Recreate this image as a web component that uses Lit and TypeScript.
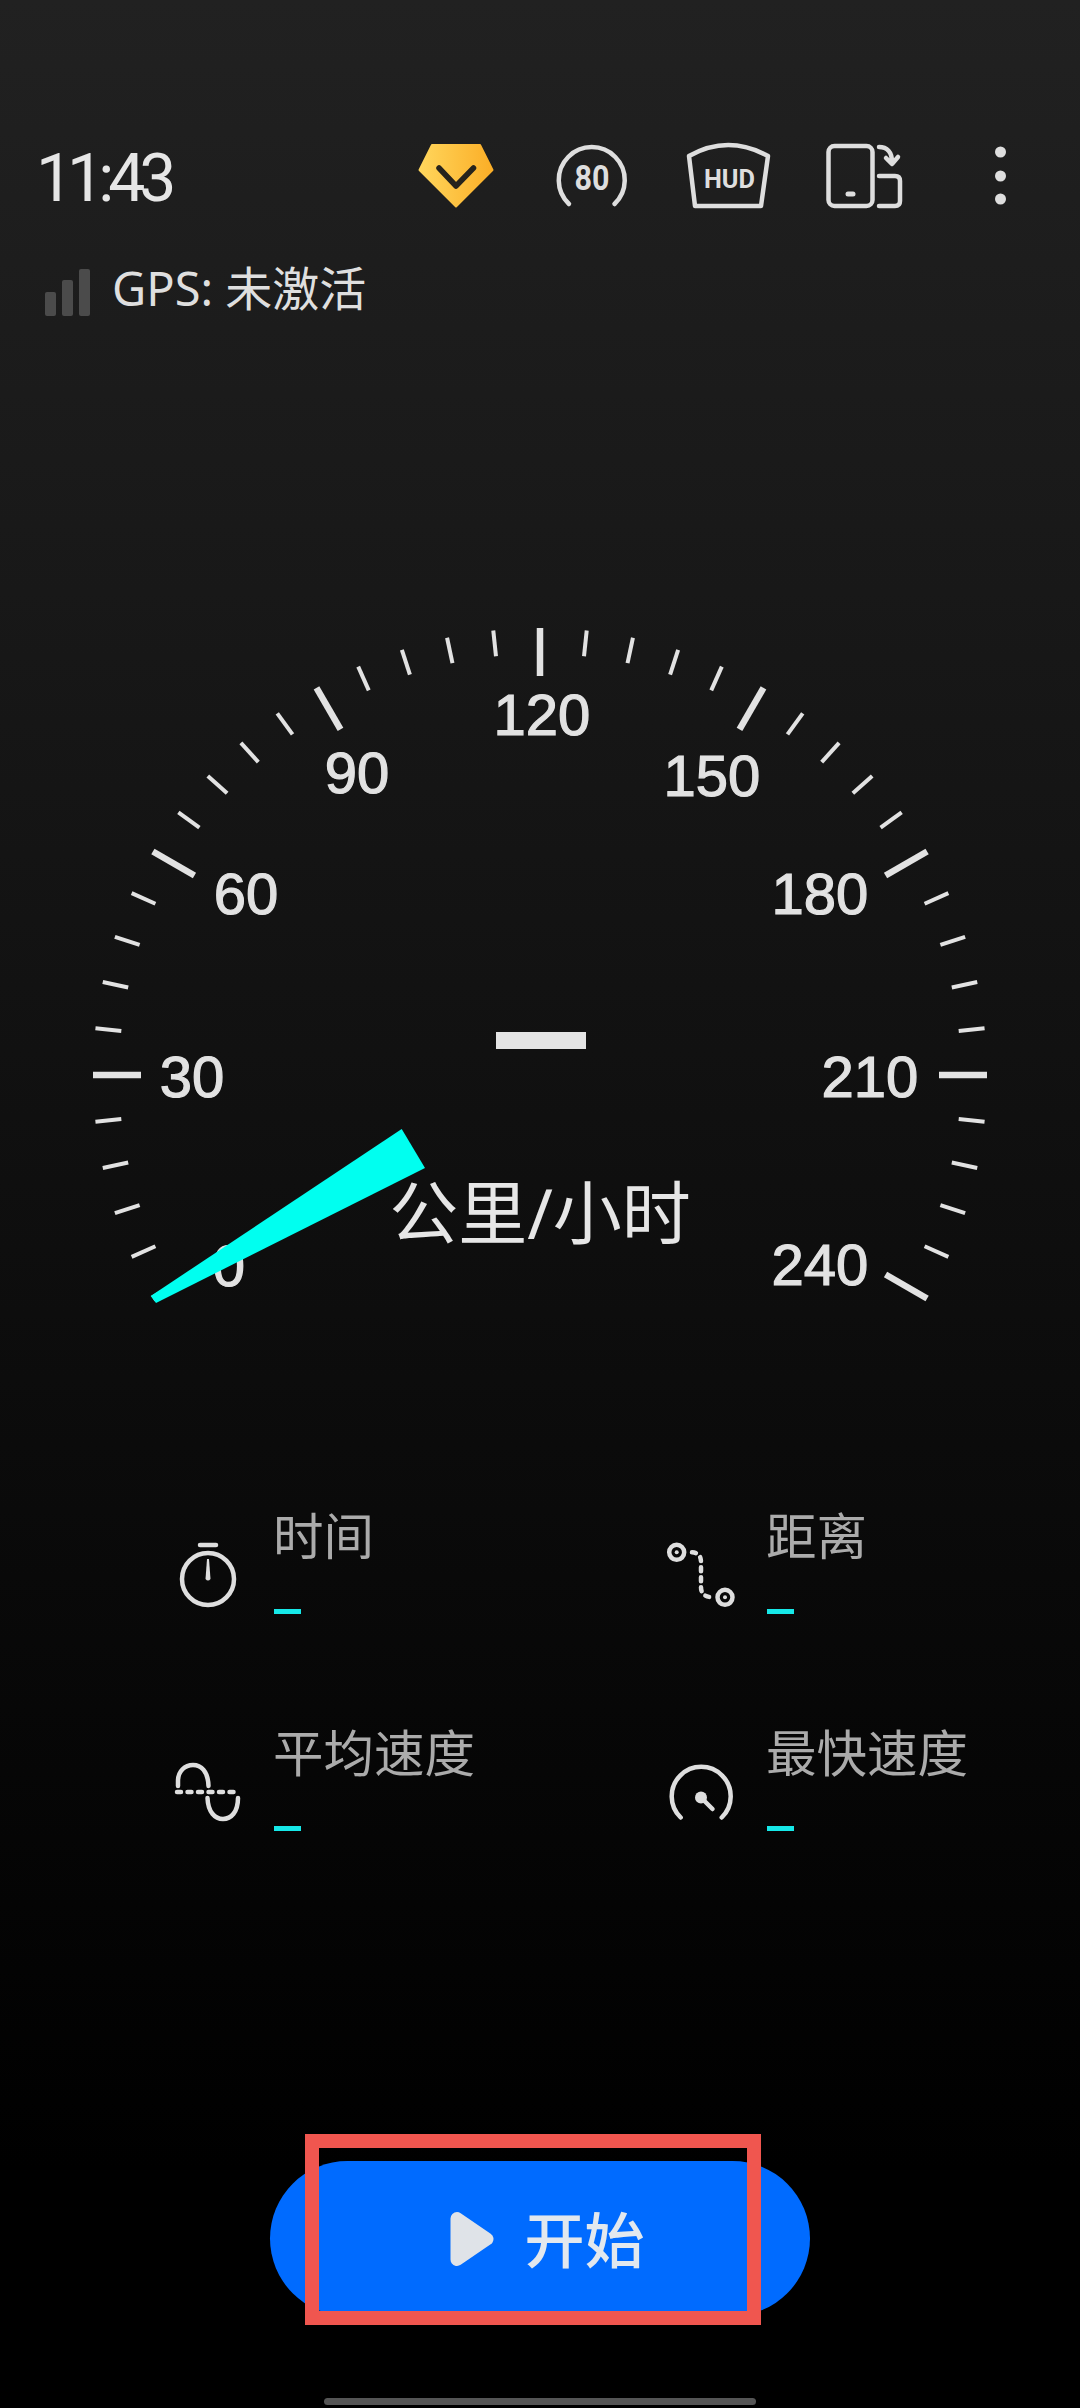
import { LitElement, html, css, svg } from "lit";
import { customElement } from "lit/decorators.js";

const CX = 540;
const CY = 1075;

function tick(i: number) {
  const major = i % 5 === 0;
  const a = ((-30 + i * 6) * Math.PI) / 180;
  const r1 = 447;
  const r0 = major ? 399 : 421;
  const x = (r: number) => (CX - r * Math.cos(a)).toFixed(2);
  const y = (r: number) => (CY - r * Math.sin(a)).toFixed(2);
  return svg`<line class=${major ? "major" : "minor"} x1=${x(r0)} y1=${y(r0)} x2=${x(r1)} y2=${y(r1)}></line>`;
}

const LABELS: [string, number, number][] = [
  ["0", 229, 1265],
  ["30", 192, 1076],
  ["60", 246, 893],
  ["90", 357, 772],
  ["120", 542, 714],
  ["150", 712, 775],
  ["180", 820, 893],
  ["210", 870, 1076],
  ["240", 820, 1264],
];

@customElement("app-root")
export class AppRoot extends LitElement {
  static styles = css`
    :host {
      display: flex;
      flex-direction: column;
      width: 1080px;
      height: 2408px;
      overflow: hidden;
      background: linear-gradient(180deg, #212121 0%, #000 90%);
      font-family: "Noto Sans", Roboto, "Noto Sans CJK SC", sans-serif;
      color: #e2e2e2;
    }
    svg { display: block; }
    .top {
      display: flex;
      align-items: center;
      height: 80px;
      margin-top: 136px;
      padding: 0 12px 0 36px;
    }
    .time {
      flex: 1;
      margin-top: 6px;
      font-family: Roboto, sans-serif;
      font-weight: 400;
      font-size: 66px;
      letter-spacing: -6px;
      line-height: 80px;
      color: #e6e6e6;
    }
    .cell { width: 136px; height: 80px; flex: none; }
    .ic { fill: none; stroke: #dedede; stroke-width: 4.500; stroke-linecap: round; stroke-linejoin: round; }
    .ictext { fill: #dedede; font-family: Roboto, sans-serif; font-weight: 700; text-anchor: middle; }
    .icfill { fill: #dedede; }
    .gps {
      display: flex;
      align-items: center;
      gap: 22px;
      height: 48px;
      margin-top: 53px;
      padding-left: 45px;
      font-size: 47px;
      line-height: 48px;
      color: #dfdfdf;
      font-family: "Noto Sans", "Noto Sans CJK SC", sans-serif;
    }
    .gps span { margin-top: -11px; }
    .bar { fill: #4b4b4b; }
    .gauge { margin-top: 283px; width: 1080px; height: 720px; flex: none; }
    .major { stroke: #e2e2e2; stroke-width: 6.500; }
    .minor { stroke: #e2e2e2; stroke-width: 4; }
    .num {
      fill: #e2e2e2;
      stroke: #e2e2e2;
      stroke-width: 1.200;
      font-family: "Liberation Sans", Arial, sans-serif;
      font-size: 58px;
      text-anchor: middle;
      dominant-baseline: central;
    }
    .unit {
      fill: #e6e6e6;
      font-family: "Noto Sans", "Noto Sans CJK SC", sans-serif;
      font-size: 69px;
      text-anchor: middle;
      dominant-baseline: central;
    }
    .speed { fill: #e4e4e4; }
    .needle { fill: #00fff0; }
    .stats {
      display: grid;
      grid-template-columns: 493px 1fr;
      row-gap: 109px;
      margin-top: 186px;
      padding-left: 164px;
    }
    .stat { display: flex; align-items: flex-end; gap: 22px; height: 108px; }
    .stat svg { width: 88px; height: 88px; flex: none; }
    .label {
      font-family: "Noto Sans CJK SC", sans-serif;
      font-size: 50.500px;
      line-height: 60px;
      margin: -3px 0 0 -1px;
      color: #ababab;
    }
    .dash { width: 27px; height: 5px; margin-top: 46px; background: #16e8e8; }
    .start {
      position: relative;
      box-sizing: border-box;
      display: flex;
      align-items: center;
      justify-content: center;
      gap: 31px;
      width: 540px;
      height: 155px;
      margin: 330px auto 0;
      padding-left: 14px;
      border-radius: 78px;
      background: #006bff;
      font-family: "Noto Sans CJK SC", sans-serif;
      font-weight: 500;
      font-size: 60px;
      color: #e2e8ee;
    }
    .start span { margin-top: -4px; }
    .start svg { width: 44px; height: 56px; flex: none; }
    .play { fill: #dfe3e8; stroke: #dfe3e8; stroke-width: 13; stroke-linejoin: round; }
    .mark {
      position: absolute;
      left: 35px;
      top: -27px;
      box-sizing: border-box;
      width: 456px;
      height: 191px;
      border: 14px solid #f0564f;
    }
    .home { width: 432px; height: 7px; margin: 82px auto 0; border-radius: 4px; background: #555; }
  `;

  private stat(label: string, icon: unknown) {
    return html`<div class="stat">
      ${icon}
      <div><div class="label">${label}</div><div class="dash"></div></div>
    </div>`;
  }

  render() {
    return html`
      <div class="top">
        <div class="time">11:43</div>
        <svg class="cell" viewBox="389 136 136 80">
          <defs>
            <linearGradient id="gem" x1="0" x2="1" y1="0" y2="0">
              <stop offset="0" stop-color="#ffd65c"></stop>
              <stop offset="1" stop-color="#fbae27"></stop>
            </linearGradient>
          </defs>
          <path fill="url(#gem)" stroke="url(#gem)" stroke-width="2" stroke-linejoin="round" d="M433 145H481L493.500 170L457 206.500L420.500 170Z"></path>
          <path fill="none" stroke="#26231c" stroke-width="5.500" stroke-linecap="round" stroke-linejoin="round" d="M440 168L457 186L474.500 168"></path>
        </svg>
        <svg class="cell" viewBox="525 136 136 80">
          <path class="ic" d="M570 204A33 33 0 1 1 615.500 204"></path>
          <text class="ictext" x="593" y="190" font-size="35" textLength="35" lengthAdjust="spacingAndGlyphs">80</text>
        </svg>
        <svg class="cell" viewBox="661 136 136 80">
          <path class="ic" d="M690 156Q729 134 769 156L762 206H696Z"></path>
          <text class="ictext" x="730.500" y="187.500" font-size="26" textLength="51" lengthAdjust="spacingAndGlyphs">HUD</text>
        </svg>
        <svg class="cell" viewBox="797 136 136 80">
          <rect class="ic" x="829.500" y="146" width="44" height="60" rx="6"></rect>
          <rect class="icfill" x="846.500" y="191.500" width="10" height="5" rx="2.500"></rect>
          <path class="ic" d="M880 176H896Q901 176 901 181V201Q901 206 896 206H880"></path>
          <path class="ic" d="M880 147C888 147 893 152 893 162M887 158L893 164L899 157"></path>
        </svg>
        <svg class="cell" viewBox="932 136 136 80">
          <circle class="icfill" cx="1000.500" cy="152" r="5.500"></circle>
          <circle class="icfill" cx="1000.500" cy="176" r="5.500"></circle>
          <circle class="icfill" cx="1000.500" cy="199" r="5.500"></circle>
        </svg>
      </div>

      <div class="gps">
        <svg width="45" height="48" viewBox="45 269 45 48">
          <rect class="bar" x="45" y="292" width="11" height="24" rx="2"></rect>
          <rect class="bar" x="62" y="280" width="11" height="36" rx="2"></rect>
          <rect class="bar" x="79" y="269" width="11" height="47" rx="2"></rect>
        </svg>
        <span>GPS: 未激活</span>
      </div>

      <svg class="gauge" viewBox="0 600 1080 720">
        ${Array.from({ length: 41 }, (_, i) => tick(i))}
        ${LABELS.map(([t, x, y]) => svg`<text class="num" x=${x} y=${y}>${t}</text>`)}
        <rect class="speed" x="496" y="1032" width="90" height="17"></rect>
        <text class="unit" x="540" y="1212">公里/小时</text>
        <polygon class="needle" points="150.700,1296 156,1303 425,1168 401.700,1129"></polygon>
      </svg>

      <div class="stats">
        ${this.stat("时间", html`<svg viewBox="164 1526 88 88">
          <circle class="ic" cx="208" cy="1579" r="26"></circle>
          <path class="ic" d="M200 1545H216"></path>
          <path class="icfill" d="M207 1559H209L210.500 1579Q208 1582 205.500 1579Z"></path>
        </svg>`)}
        ${this.stat("距离", html`<svg viewBox="657 1526 88 88">
          <circle class="ic" cx="676.700" cy="1552.300" r="7.500"></circle>
          <circle class="icfill" cx="676.700" cy="1552.300" r="2"></circle>
          <circle class="ic" cx="725" cy="1597.300" r="7.500"></circle>
          <circle class="icfill" cx="725" cy="1597.300" r="2"></circle>
          <path class="ic" stroke-dasharray="4 6" d="M692 1552.300Q701 1553 701 1562V1587Q701 1596 710 1597"></path>
        </svg>`)}
        ${this.stat("平均速度", html`<svg viewBox="164 1743 88 88">
          <path class="ic" d="M178 1786V1781C178 1771 185 1765 193 1765C201 1765 208 1771 208.500 1786"></path>
          <path class="ic" d="M207.500 1798C208 1812 215 1819 223 1819C231 1819 238 1812 238 1798"></path>
          <path class="ic" stroke-dasharray="4 6.500" d="M177 1792H240"></path>
        </svg>`)}
        ${this.stat("最快速度", html`<svg viewBox="657 1743 88 88">
          <path class="ic" d="M680.700 1817.500A29.500 29.500 0 1 1 721.700 1817.500"></path>
          <circle class="icfill" cx="701" cy="1797.500" r="6"></circle>
          <path class="ic" stroke-width="4.500" d="M701 1797.500L712.500 1809"></path>
        </svg>`)}
      </div>

      <div class="start">
        <svg viewBox="0 0 44 56"><path class="play" d="M7 7.500L37 28L7 48.500Z"></path></svg>
        <span>开始</span>
        <div class="mark"></div>
      </div>
      <div class="home"></div>
    `;
  }
}
